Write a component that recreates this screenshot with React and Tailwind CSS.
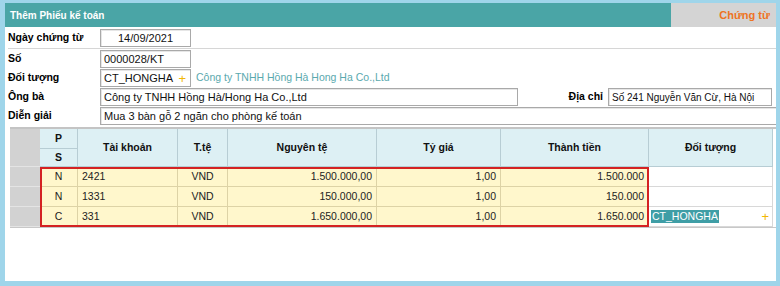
import React from "react";

const F = { fontFamily: '"Liberation Sans", Arial, sans-serif' };

function Input({ className = "", children }) {
  return (
    <div
      className={
        "h-[18px] border border-[#a9a9a9] bg-white flex items-center px-[3px] text-[#111] whitespace-nowrap overflow-hidden shadow-[inset_1px_1px_0_#e6e6e6] " +
        className
      }
    >
      {children}
    </div>
  );
}

function Label({ children }) {
  return <div className="w-[92px] shrink-0 font-bold text-[10.5px] text-black">{children}</div>;
}

const hd = "bg-[#ddf0f4] border-r border-b border-[#b7cdd4] flex items-center justify-center font-bold text-[10.5px] text-[#111]";
const cell = "bg-[#fff7cc] border-r border-b border-[#ddd3a6] flex items-center text-[10.5px] text-[#222]";
const gray = "bg-[#d2d2d2] border-b border-[#e4e4e4]";

const rows = [
  ["N", "2421", "VND", "1.500.000,00", "1,00", "1.500.000"],
  ["N", "1331", "VND", "150.000,00", "1,00", "150.000"],
  ["C", "331", "VND", "1.650.000,00", "1,00", "1.650.000"],
];

export default function App() {
  return (
    <div style={F} className="w-[780px] h-[286px] bg-[#9fd5ea] pt-[3px] pl-[5px] pr-[4px] pb-[5px]">
      <div className="w-full h-full bg-white flex flex-col">
        {/* header */}
        <div className="h-[24px] flex shrink-0">
          <div className="flex-1 bg-[#4aa5a6] flex items-center pl-[5px] text-white font-bold text-[10px]">
            Thêm Phiếu kế toán
          </div>
          <div className="w-[105px] bg-[#d4d4d4] flex items-center justify-end pr-[6px] text-[#ee7322] font-bold text-[11px]">
            Chứng từ
          </div>
        </div>

        {/* form */}
        <div className="flex flex-col pl-[3px]">
          <div className="flex items-center pt-[2px] pb-[1px] border-b border-[#d6d6d6]">
            <Label>Ngày chứng từ</Label>
            <Input className="w-[91px] justify-center text-[11px]">14/09/2021</Input>
          </div>
          <div className="flex items-center mt-[1px]">
            <Label>Số</Label>
            <Input className="w-[91px] text-[11px]">0000028/KT</Input>
          </div>
          <div className="flex items-center mt-[1px]">
            <Label>Đối tượng</Label>
            <Input className="w-[91px] justify-between text-[11px]">
              <span>CT_HONGHA</span>
              <span className="text-[#f2b705] text-[13px] leading-none pr-[1px]">+</span>
            </Input>
            <span className="ml-[5px] text-[10.5px] text-[#5aa9ae]">Công ty TNHH Hồng Hà Hong Ha Co.,Ltd</span>
          </div>
          <div className="flex items-center mt-[1px] pr-[4px]">
            <Label>Ông bà</Label>
            <Input className="w-[418px] shrink-0 text-[11px]">Công ty TNHH Hồng Hà/Hong Ha Co.,Ltd</Input>
            <div className="flex-1 text-right pr-[5px] font-bold text-[10.5px] text-black whitespace-nowrap">Địa chỉ</div>
            <Input className="w-[164px] shrink-0 text-[10px]">Số 241 Nguyễn Văn Cừ, Hà Nội</Input>
          </div>
          <div className="flex items-center mt-[1px]">
            <Label>Diễn giải</Label>
            <Input className="flex-1 border-r-0 text-[11px]">Mua 3 bàn gỗ 2 ngăn cho phòng kế toán</Input>
          </div>
        </div>

        {/* table */}
        <div className="mt-[2px] ml-[5px] border-t-2 border-[#c4c4c4] border-b border-b-[#c8c8c8]">
          <div className="grid grid-cols-[30px_38px_100px_50px_149px_124px_148px_124px] grid-rows-[20px_18px_20px_20px_20px]">
            <div className={gray + " row-span-2 col-start-1 row-start-1"} />
            <div className={hd + " col-start-2 row-start-1"}>P</div>
            <div className={hd + " col-start-2 row-start-2"}>S</div>
            <div className={hd + " row-span-2 col-start-3 row-start-1"}>Tài khoản</div>
            <div className={hd + " row-span-2 col-start-4 row-start-1"}>T.tệ</div>
            <div className={hd + " row-span-2 col-start-5 row-start-1"}>Nguyên tệ</div>
            <div className={hd + " row-span-2 col-start-6 row-start-1"}>Tỷ giá</div>
            <div className={hd + " row-span-2 col-start-7 row-start-1"}>Thành tiền</div>
            <div className={hd + " row-span-2 col-start-8 row-start-1"}>Đối tượng</div>

            {rows.map((r, i) => (
              <React.Fragment key={i}>
                <div className={gray + " col-start-1"} style={{ gridRowStart: i + 3 }} />
                <div className={cell + " justify-center"} style={{ gridRowStart: i + 3, gridColumnStart: 2 }}>{r[0]}</div>
                <div className={cell + " pl-[4px]"} style={{ gridRowStart: i + 3, gridColumnStart: 3 }}>{r[1]}</div>
                <div className={cell + " justify-center"} style={{ gridRowStart: i + 3, gridColumnStart: 4 }}>{r[2]}</div>
                <div className={cell + " justify-end pr-[4px]"} style={{ gridRowStart: i + 3, gridColumnStart: 5 }}>{r[3]}</div>
                <div className={cell + " justify-end pr-[4px]"} style={{ gridRowStart: i + 3, gridColumnStart: 6 }}>{r[4]}</div>
                <div className={cell + " justify-end pr-[4px]"} style={{ gridRowStart: i + 3, gridColumnStart: 7 }}>{r[5]}</div>
                <div
                  className="bg-white border-r border-b border-[#d8d8d8] flex items-center justify-between pl-[2px] pr-[3px] text-[10.5px]"
                  style={{ gridRowStart: i + 3, gridColumnStart: 8 }}
                >
                  {i === 2 && (
                    <>
                      <span className="bg-[#3f9ea6] text-white px-[1px] leading-[13px]">CT_HONGHA</span>
                      <span className="text-[#f2b705] text-[13px] leading-none">+</span>
                    </>
                  )}
                </div>
              </React.Fragment>
            ))}

            <div className="col-start-2 col-span-6 row-start-3 row-span-3 border-2 border-[#d42222] pointer-events-none" />
          </div>
        </div>
      </div>
    </div>
  );
}
